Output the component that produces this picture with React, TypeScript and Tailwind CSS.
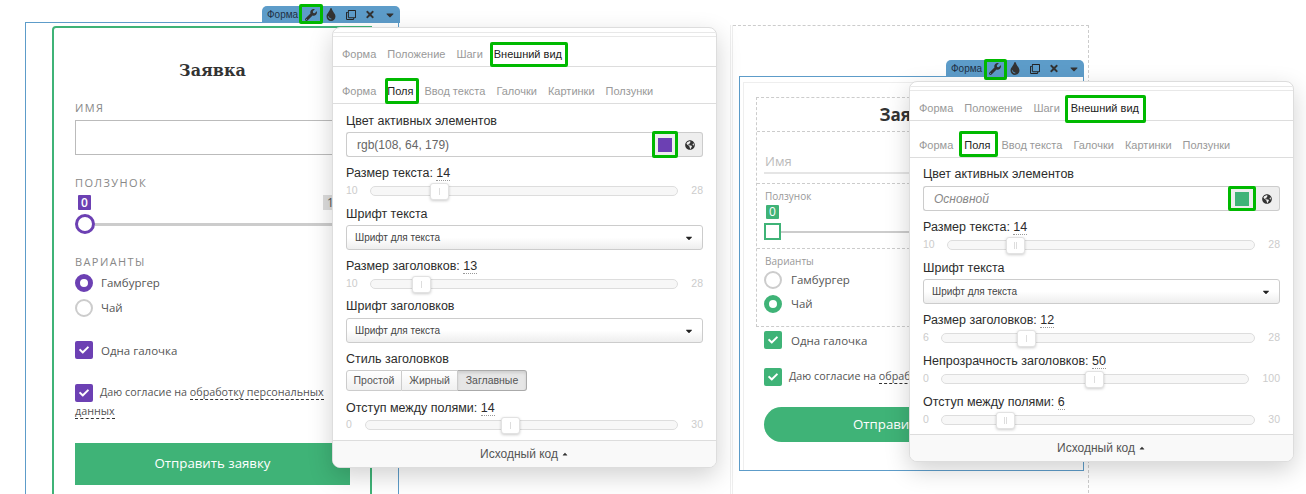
import React from "react";
import { FaWrench, FaTint, FaRegClone, FaTimes, FaCaretDown, FaCaretUp, FaGlobeAmericas, FaCheck } from "react-icons/fa";

const MARK = "absolute border-[3px] border-[#00b900] rounded-[2px] pointer-events-none ";

const Toolbar = ({ pos, mark }: { pos: string; mark: string }) => (
  <div className={"absolute z-10 flex h-[17px] w-[138px] items-center rounded-t-[5px] bg-[#5d9cc9] pl-[5px] text-[10px] text-[#1f3044] font-['Liberation_Sans',sans-serif] " + pos}>
    <span className="w-[35px]">Форма</span>
    <span className="relative flex h-[17px] w-[20px] items-center justify-center">
      <FaWrench className="h-[12px] w-[12px] text-[#333]" />
      <span className={MARK + mark} />
    </span>
    <span className="flex w-[20px] justify-center"><FaTint className="h-[13px] w-[12px] text-[#333]" /></span>
    <span className="flex w-[20px] justify-center"><FaRegClone className="h-[10px] w-[10px] text-[#222]" /></span>
    <span className="flex w-[20px] justify-center"><FaTimes className="h-[11px] w-[10px] text-[#333]" /></span>
    <span className="flex w-[20px] justify-center"><FaCaretDown className="h-[12px] w-[12px] text-[#333]" /></span>
  </div>
);

const Tab = ({ text, active, mark }: { text: string; active?: boolean; mark?: string }) => (
  <span className={"relative leading-[14px] " + (active ? "text-[#222]" : "text-[#999]")}>
    {text}
    {mark && <span className={MARK + mark} />}
  </span>
);

const Label = ({ text, value, className }: { text: string; value?: string; className: string }) => (
  <div className={"h-[15px] text-[12.5px] leading-[15px] text-[#2c2c2c] " + className}>
    {text}
    {value && (
      <>
        : <span className="border-b border-dotted border-[#999]">{value}</span>
      </>
    )}
  </div>
);

const Slider = ({ min, max, left, right, thumb, className, double }: { min: string; max: string; left: string; right: string; thumb: string; className: string; double?: boolean }) => (
  <div className={"flex h-[10px] items-center text-[10.5px] text-[#ccc] " + className}>
    <span className={left}>{min}</span>
    <div className="relative h-[10px] flex-1 rounded-full border border-[#ddd] bg-[#f7f7f7]">
      <span className={"absolute top-[-4px] flex h-[17px] w-[19px] items-center justify-center gap-[1px] rounded-[3px] border border-[#e2e2e2] bg-white shadow-[0_1px_3px_rgba(0,0,0,0.2)] " + thumb}>
        <i className="h-[7px] w-px bg-[#ddd]" />
        {double && <i className="h-[7px] w-px bg-[#ddd]" />}
      </span>
    </div>
    <span className={"text-right " + right}>{max}</span>
  </div>
);

const Select = ({ className }: { className: string }) => (
  <div className={"flex h-[25px] items-center justify-between rounded-[3px] border border-[#ccc] bg-linear-to-b from-white from-50% to-[#eeeeee] pl-[8px] pr-[8px] text-[10px] text-[#444] " + className}>
    Шрифт для текста
    <FaCaretDown className="h-[10px] w-[10px] text-[#222]" />
  </div>
);

const ColorInput = ({ value, italic, swatch, mark, className }: { value: string; italic?: boolean; swatch: string; mark: string; className: string }) => (
  <div className={"flex h-[25px] " + className}>
    <div className={"flex flex-1 items-center rounded-l-[3px] border border-r-0 border-[#ccc] pl-[10px] text-[12px] " + (italic ? "italic text-[#888]" : "text-[#666]")}>
      {value}
    </div>
    <div className="relative flex w-[26px] items-center justify-center border-y border-[#ccc] bg-[#eee]">
      <span className={"h-[14px] w-[14px] " + swatch} />
      <span className={MARK + mark} />
    </div>
    <div className="flex w-[25px] items-center justify-center rounded-r-[3px] border border-l-0 border-[#ccc] bg-[#eee]">
      <FaGlobeAmericas className="h-[10px] w-[10px] text-[#333]" />
    </div>
  </div>
);

const Panel = ({ pos, marks, children }: { pos: string; marks: string[]; children: React.ReactNode }) => (
  <div className={"absolute z-20 w-[385px] overflow-hidden rounded-[8px] border border-[#ddd] bg-white text-[11px] shadow-[0_8px_24px_rgba(0,0,0,0.18)] font-['Liberation_Sans',sans-serif] " + pos}>
    <div className="mt-[4px] h-[5px] border-y border-[#e8e8e8]" />
    <div className="flex gap-[11px] border-b border-[#ddd] pb-[5px] pl-[9px] pt-[10px]">
      <Tab text="Форма" />
      <Tab text="Положение" />
      <Tab text="Шаги" />
      <Tab text="Внешний вид" active mark={marks[0]} />
    </div>
    <div className="flex gap-[11px] border-b border-[#ddd] pb-[5px] pl-[9px] pt-[17px]">
      <Tab text="Форма" />
      <Tab text="Поля" active mark={marks[1]} />
      <Tab text="Ввод текста" />
      <Tab text="Галочки" />
      <Tab text="Картинки" />
      <Tab text="Ползунки" />
    </div>
    {children}
    <div className="flex h-[27px] items-center justify-center gap-[3px] border-t border-[#ddd] bg-[#f9f9f9] text-[12px] text-[#555]">
      Исходный код
      <FaCaretUp className="h-[8px] w-[8px] text-[#333]" />
    </div>
  </div>
);

const Radio = ({ checked, color }: { checked: boolean; color: string }) => (
  <span className={"inline-block h-[18px] w-[18px] rounded-full bg-white " + (checked ? "border-[5px] " + color : "border-2 border-[#ccc]")} />
);

const Check = ({ color, className }: { color: string; className?: string }) => (
  <span className={"inline-flex h-[18px] w-[18px] items-center justify-center rounded-[2px] align-middle " + color + " " + (className ?? "")}>
    <FaCheck className="h-[10px] w-[10px] text-white" />
  </span>
);

const App: React.FC = () => {
  return (
    <div className="relative flex h-[494px] w-[1306px] overflow-hidden bg-white">
      {/* левая форма */}
      <div className="relative ml-[25px] mt-[22px] h-[472px] w-[374px] shrink-0 border-x border-t border-[#5d9cc9]">
        <Toolbar pos="left-[236px] top-[-17px]" mark="-left-[2px] -right-[2px] -top-[2px] -bottom-[1px]" />
        <div className="ml-[26px] mt-[3px] h-[480px] w-[320px] rounded-tl-[4px] border-2 border-[#3fb377] pl-[21px] pr-[20px] pt-[31px] text-[11.5px] text-[#555] font-['Open_Sans',sans-serif]">
          <div className="text-center text-[16px] font-bold leading-[24px] text-[#333] font-['DejaVu_Serif',serif]">Заявка</div>
          <div className="mt-[18px] h-[14px] text-[11px] leading-[14px] tracking-[1.4px] text-[#888]">ИМЯ</div>
          <div className="mt-[5px] h-[35px] border border-[#bbb]" />
          <div className="mt-[21px] h-[14px] text-[11px] leading-[14px] tracking-[1.4px] text-[#888]">ПОЛЗУНОК</div>
          <div className="mt-[5px] flex h-[15px] justify-between pl-[3px]">
            <span className="flex w-[13px] items-center justify-center rounded-[1px] bg-[#6c40b3] text-[12px] font-semibold text-white">0</span>
            <span className="flex w-[27px] items-center bg-[#ddd] pl-[4px] text-[12px] text-[#555]">1</span>
          </div>
          <div className="mt-[4px] flex h-[20px] items-center">
            <span className="h-[20px] w-[20px] shrink-0 rounded-full border-[3px] border-[#6c40b3] bg-white" />
            <span className="h-[3px] flex-1 bg-[#ccc]" />
          </div>
          <div className="mt-[21px] h-[14px] text-[11px] leading-[14px] tracking-[1.4px] text-[#888]">ВАРИАНТЫ</div>
          <div className="mt-[5px] flex h-[18px] items-center gap-[8px]">
            <Radio checked color="border-[#6c40b3]" />
            Гамбургер
          </div>
          <div className="mt-[7px] flex h-[18px] items-center gap-[8px]">
            <Radio checked={false} color="" />
            Чай
          </div>
          <div className="mt-[24px] flex h-[18px] items-center gap-[8px]">
            <Check color="bg-[#6c40b3]" />
            <span className="pt-[2px]">Одна галочка</span>
          </div>
          <p className="mt-[24px] text-[10.75px] leading-[18px]">
            <Check color="bg-[#6c40b3]" className="mr-[7px]" />
            Даю согласие на{" "}
            <span className="border-b border-dashed border-[#333]">обработку персональных данных</span>
          </p>
          <div className="mt-[23px] flex h-[42px] items-center justify-center bg-[#3fb377] text-[13.25px] text-white">Отправить заявку</div>
        </div>
        <Panel pos="left-[306px] top-[4px]" marks={["-left-[4px] -right-[6px] -top-[5px] -bottom-[6px]", "-left-[2px] -right-[6px] -top-[6px] -bottom-[6px]"]}>
          <div className="px-[13px] pb-[10px]">
            <Label text="Цвет активных элементов" className="mt-[10px]" />
            <ColorInput value="rgb(108, 64, 179)" swatch="bg-[#6c40b3]" mark="left-0 right-0 -top-[2px] -bottom-[2px]" className="mt-[3px]" />
            <Label text="Размер текста" value="14" className="mt-[9px]" />
            <Slider min="10" max="28" left="w-[24px]" right="w-[25px]" thumb="left-[59px]" className="mt-[5px]" />
            <Label text="Шрифт текста" className="mt-[11px]" />
            <Select className="mt-[3px]" />
            <Label text="Размер заголовков" value="13" className="mt-[9px]" />
            <Slider min="10" max="28" left="w-[24px]" right="w-[25px]" thumb="left-[41px]" className="mt-[5px]" />
            <Label text="Шрифт заголовков" className="mt-[10px]" />
            <Select className="mt-[4px]" />
            <Label text="Стиль заголовков" className="mt-[9px]" />
            <div className="mt-[3px] flex h-[21px] w-[181px] text-[10.5px] text-[#555]">
              <span className="flex w-[56px] items-center justify-center rounded-l-[3px] border border-[#ccc] bg-linear-to-b from-white to-[#f0f0f0]">Простой</span>
              <span className="flex w-[56px] items-center justify-center border-y border-r border-[#ccc] bg-linear-to-b from-white to-[#f0f0f0]">Жирный</span>
              <span className="flex flex-1 items-center justify-center rounded-r-[3px] border border-l-0 border-[#aaa] bg-[#e6e6e6] shadow-[inset_0_2px_3px_rgba(0,0,0,0.1)]">Заглавные</span>
            </div>
            <Label text="Отступ между полями" value="14" className="mt-[10px]" />
            <Slider min="0" max="30" left="w-[19px]" right="w-[25px]" thumb="left-[135px]" className="mt-[4px]" />
          </div>
        </Panel>
      </div>

      {/* правая форма */}
      <div className="ml-[331px] mt-[25px] h-[469px] w-[359px] shrink-0 border-l border-[#eee] pl-px">
        <div className="h-full border-l border-[#eee]">
          <div className="h-[468px] border-r border-t border-dashed border-[#ccc] pl-[6px] pr-[4px] pt-[50px]">
            <div className="relative h-[395px] w-[345px] border border-[#5d9cc9]">
              <Toolbar pos="left-[206px] top-[-17px]" mark="-left-[1px] -right-[2px] -top-[1px] -bottom-[3px]" />
              <div className="ml-[3px] mt-[5px] h-[388px] border-l border-t border-[#eee] pl-[12px] pt-[14px] text-[11.5px] text-[#555] font-['Open_Sans',sans-serif]">
                <div className="w-[310px] border border-dashed border-[#ccc]">
                  <div className="flex h-[34px] items-center justify-center border-b border-dashed border-[#ccc] text-[17px] font-bold text-[#333]">Заявка</div>
                  <div className="h-[52px] border-b border-dashed border-[#ccc] pl-[7px] pt-[11px]">
                    <div className="h-[31px] border-b-2 border-[#e5e5e5] pl-px text-[13px] leading-[36px] text-[#bbb]">Имя</div>
                  </div>
                  <div className="h-[65px] border-b border-dashed border-[#ccc] pl-[7px] pt-[5px]">
                    <div className="h-[14px] pl-px text-[10px] leading-[14px] text-[#999]">Ползунок</div>
                    <span className="ml-[2px] mt-[2px] flex h-[14px] w-[13px] items-center justify-center rounded-[1px] bg-[#3fb377] text-[12px] text-white">0</span>
                    <div className="mt-[4px] flex h-[17px] items-center">
                      <span className="h-[17px] w-[17px] shrink-0 border-2 border-[#3fb377] bg-white" />
                      <span className="h-[2px] flex-1 bg-[#ccc]" />
                    </div>
                  </div>
                  <div className="h-[77px] pl-[7px] pt-[5px]">
                    <div className="h-[14px] pl-px text-[10px] leading-[14px] text-[#999]">Варианты</div>
                    <div className="mt-[3px] flex h-[18px] items-center gap-[9px]">
                      <Radio checked={false} color="" />
                      Гамбургер
                    </div>
                    <div className="mt-[6px] flex h-[18px] items-center gap-[9px]">
                      <Radio checked color="border-[#3fb377]" />
                      Чай
                    </div>
                  </div>
                </div>
                <div className="pl-[8px]">
                  <div className="mt-[4px] flex h-[18px] items-center gap-[9px]">
                    <Check color="bg-[#3fb377]" />
                    <span className="pt-[2px]">Одна галочка</span>
                  </div>
                  <p className="mt-[18px] h-[18px] whitespace-nowrap text-[10.75px] leading-[18px]">
                    <Check color="bg-[#3fb377]" className="mr-[7px]" />
                    Даю согласие на <span className="border-b border-dashed border-[#333]">обработку</span>
                  </p>
                  <div className="mt-[22px] flex h-[35px] w-[294px] items-center justify-center rounded-full bg-[#3fb377] text-[13.25px] text-white">Отправить заявку</div>
                </div>
              </div>
              <Panel pos="left-[169px] top-[4px]" marks={["-left-[6px] -right-[7px] -top-[6px] -bottom-[8px]", "-left-[5px] -right-[8px] -top-[7px] -bottom-[5px]"]}>
                <div className="px-[13px] pb-[9px]">
                  <Label text="Цвет активных элементов" className="mt-[9px]" />
                  <ColorInput value="Основной" italic swatch="bg-[#3fb377]" mark="-left-[1px] -right-[1px] -top-[1px] -bottom-[1px]" className="mt-[4px]" />
                  <Label text="Размер текста" value="14" className="mt-[9px]" />
                  <Slider min="10" max="28" left="w-[24px]" right="w-[25px]" thumb="left-[58px]" double className="mt-[5px]" />
                  <Label text="Шрифт текста" className="mt-[11px]" />
                  <Select className="mt-[3px]" />
                  <Label text="Размер заголовков" value="12" className="mt-[9px]" />
                  <Slider min="6" max="28" left="w-[18px]" right="w-[25px]" thumb="left-[75px]" className="mt-[5px]" />
                  <Label text="Непрозрачность заголовков" value="50" className="mt-[11px]" />
                  <Slider min="0" max="100" left="w-[18px]" right="w-[31px]" thumb="left-[143px]" className="mt-[5px]" />
                  <Label text="Отступ между полями" value="6" className="mt-[11px]" />
                  <Slider min="0" max="30" left="w-[18px]" right="w-[25px]" thumb="left-[54px]" double className="mt-[5px]" />
                </div>
              </Panel>
            </div>
          </div>
        </div>
      </div>
    </div>
  );
};

export default App;
